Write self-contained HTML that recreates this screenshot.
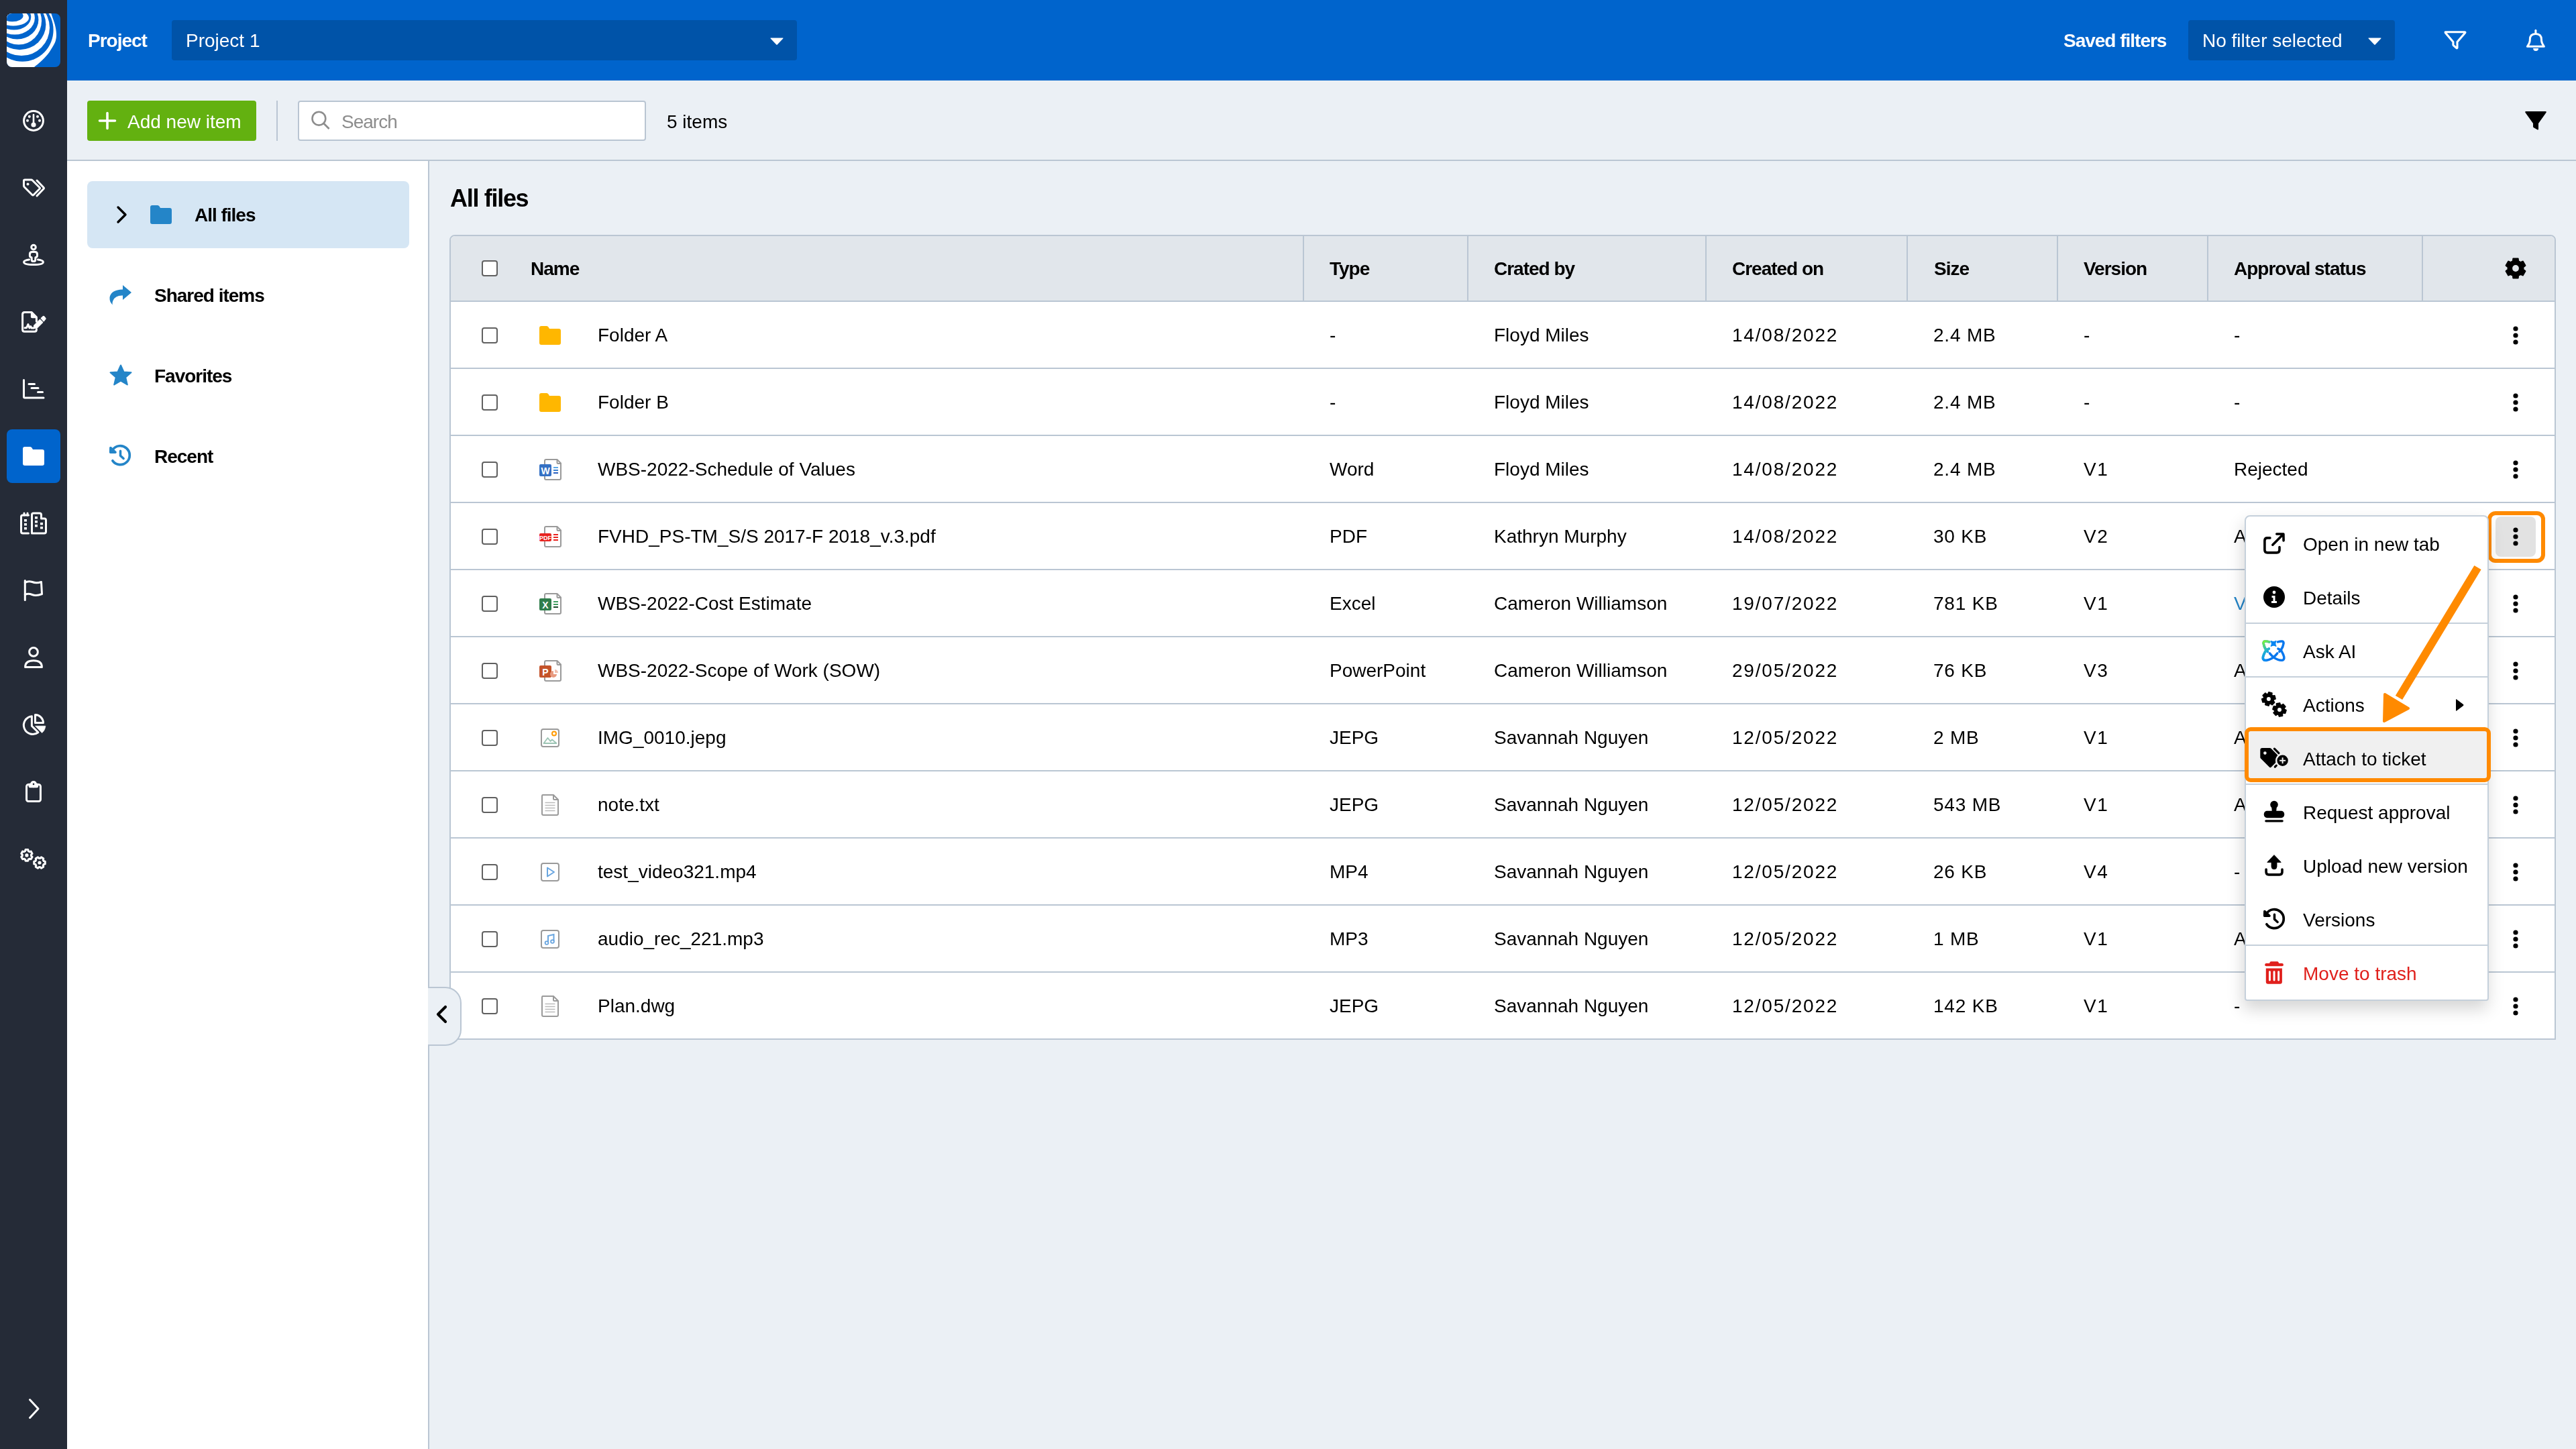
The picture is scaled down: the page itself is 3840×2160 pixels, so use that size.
<!DOCTYPE html>
<html><head><meta charset="utf-8">
<style>
*{box-sizing:border-box;margin:0;padding:0}
html,body{width:3840px;height:2160px;overflow:hidden;background:#ebf0f5;font-family:"Liberation Sans",sans-serif;color:#000;-webkit-font-smoothing:antialiased}
.t{will-change:transform}
.abs{position:absolute}
.t{position:absolute;white-space:nowrap;line-height:1}
svg{overflow:visible}
</style></head><body>

<div class="abs" style="left:0px;top:0px;width:100px;height:2160px;background:#252b37"></div>
<svg class="abs" style="left:10px;top:20px;" width="80" height="80" viewBox="0 0 80 80"><defs><clipPath id="lc"><rect x="0" y="0" width="80" height="80" rx="8"/></clipPath></defs><g clip-path="url(#lc)"><rect width="80" height="80" fill="#0064cc"/><path d="M64.00 -8.00 C64.38 -6.67 65.00 -4.10 66.30 0.00 C67.60 4.10 70.52 11.53 71.80 16.60 C73.08 21.67 73.83 26.33 74.00 30.40 C74.17 34.47 73.72 37.78 72.80 41.00 C71.88 44.22 70.42 46.42 68.50 49.70 C66.58 52.98 64.25 57.02 61.30 60.70 C58.35 64.38 54.18 68.58 50.80 71.80 C47.42 75.02 43.80 77.63 41.00 80.00 C38.20 82.37 35.17 85.00 34.00 86.00 L-5 86 L-5 -8 Z" fill="#fff"/><ellipse cx="23.3" cy="24.8" rx="46.3" ry="47.0" fill="#0064cc"/><ellipse cx="22.0" cy="21.2" rx="42.0" ry="41.9" fill="#fff"/><ellipse cx="19.2" cy="16.4" rx="39.2" ry="37.8" fill="#0064cc"/><ellipse cx="17.8" cy="11.3" rx="34.2" ry="35.3" fill="#fff"/><ellipse cx="15.5" cy="9.5" rx="31.9" ry="29.0" fill="#0064cc"/><ellipse cx="12.0" cy="6.8" rx="29.9" ry="24.8" fill="#fff"/><ellipse cx="10.85" cy="5.3" rx="25.4" ry="19.3" fill="#0064cc"/><ellipse cx="9.7" cy="6.5" rx="23.4" ry="12.0" fill="#fff"/><ellipse cx="8.3" cy="3.5" rx="16.3" ry="8.7" fill="#0064cc"/></g></svg>
<svg class="abs" style="left:34px;top:164px;" width="32" height="32" viewBox="0 0 32 32"><circle cx="16" cy="16" r="14.4" fill="none" stroke="#fff" stroke-width="3" stroke-linecap="round" stroke-linejoin="round"/><line x1="16" y1="7" x2="16" y2="20" stroke="#fff" stroke-width="2.6" stroke-linecap="round"/><circle cx="16" cy="22" r="3.6" fill="#fff"/><circle cx="9.8" cy="9.8" r="2" fill="#fff"/><circle cx="22" cy="9.8" r="2" fill="#fff"/><circle cx="7" cy="15.8" r="2" fill="#fff"/><circle cx="25" cy="15.8" r="2" fill="#fff"/></svg>
<svg class="abs" style="left:34px;top:266px;" width="32" height="32" viewBox="0 0 32 32"><path d="M1.5 3.5 Q1.5 2 3 2 L12.5 2 Q13.5 2 14.5 3 L25 13.5 Q26 14.5 25 15.5 L16 24.5 Q15 25.5 14 24.5 L2.5 13 Q1.5 12 1.5 11 Z" fill="none" stroke="#fff" stroke-width="3" stroke-linecap="round" stroke-linejoin="round" stroke-width="2.8"/><circle cx="7.5" cy="8.5" r="2" fill="#fff"/><path d="M21 3 L31 13.5 Q32 14.5 31 15.5 L21 26" fill="none" stroke="#fff" stroke-width="3" stroke-linecap="round" stroke-linejoin="round" stroke-width="2.8"/></svg>
<svg class="abs" style="left:34px;top:364px;" width="32" height="32" viewBox="0 0 32 32"><circle cx="16" cy="4.6" r="3.3" fill="none" stroke="#fff" stroke-width="3" stroke-linecap="round" stroke-linejoin="round" stroke-width="3"/><path d="M10.4 15 Q10.4 11.4 14 11.4 L18 11.4 Q21.5 11.4 21.5 15 L21.5 17 Q21.5 19.5 18.9 19.8 L18.7 23.6 Q18.6 25.6 16.6 25.6 L15.4 25.6 Q13.4 25.6 13.3 23.6 L13.1 19.8 Q10.4 19.5 10.4 17 Z" fill="none" stroke="#fff" stroke-width="3" stroke-linecap="round" stroke-linejoin="round" stroke-width="3"/><path d="M9.5 23.1 Q1.6 24.3 1.6 26.65 Q1.6 30.5 16 30.5 Q30.4 30.5 30.4 26.65 Q30.4 24.3 22.5 23.1" fill="none" stroke="#fff" stroke-width="3" stroke-linecap="round" stroke-linejoin="round" stroke-width="3.2"/></svg>
<svg class="abs" style="left:32px;top:464px;" width="40" height="32" viewBox="0 0 40 32"><path d="M22.4 26.8 L22.4 27.2 Q22.4 30.2 19.4 30.2 L4.6 30.2 Q1.6 30.2 1.6 27.2 L1.6 4.6 Q1.6 1.6 4.6 1.6 L15.2 1.6 L22.4 8.8 L22.4 15.2" fill="none" stroke="#fff" stroke-width="3" stroke-linecap="round" stroke-linejoin="round" stroke-width="3.2"/><path d="M13.9 1.6 L15.5 1.6 L22.4 8.5 L22.4 10.2 L15.9 10.2 Q13.9 10.2 13.9 8.2 Z" fill="#fff"/><path d="M5 24.8 L7.6 24.6 L9.9 19.6 L11.9 24.8 L13.8 22.6 L14.9 25 L18.5 25" fill="none" stroke="#fff" stroke-width="3" stroke-linecap="round" stroke-linejoin="round" stroke-width="2.4"/><path d="M18.3 25.4 L18.6 21 L27.5 12 L32.1 16.5 L23.3 25.2 Z" fill="#fff" stroke="#fff" stroke-width="1" stroke-linejoin="round"/><path d="M29.2 10.4 L32.4 7.5 Q33 7 33.6 7.6 L35.9 10.4 Q36.4 11 35.8 11.6 L33.2 14.9 Z" fill="#fff" stroke="#fff" stroke-width="1.2" stroke-linejoin="round"/></svg>
<svg class="abs" style="left:34px;top:564px;" width="32" height="32" viewBox="0 0 32 32"><path d="M1.5 2.5 L1.5 27.5 Q1.5 29 3 29 L31 29" fill="none" stroke="#fff" stroke-width="3" stroke-linecap="round" stroke-linejoin="round" stroke-width="2.8"/><path d="M9 8.5 L17.5 8.5 M13 14.5 L23 14.5 M22.5 20.5 L29.5 20.5" fill="none" stroke="#fff" stroke-width="3" stroke-linecap="round" stroke-linejoin="round" stroke-width="2.8"/></svg>
<div class="abs" style="left:10px;top:640px;width:80px;height:80px;background:#0064cc;border-radius:8px"></div>
<svg class="abs" style="left:34px;top:666px;" width="32" height="28" viewBox="0 0 32 28"><path d="M0 3 Q0 0 3 0 L11 0 Q12.5 0 13.5 1.5 L15 4 L29 4 Q32 4 32 7 L32 25 Q32 28 29 28 L3 28 Q0 28 0 25 Z" fill="#fff"/></svg>
<svg class="abs" style="left:30px;top:764px;" width="40" height="32" viewBox="0 0 40 32"><path d="M12.5 31 L4 31 Q1.5 31 1.5 28.5 L1.5 6.5 Q1.5 4 4 4 L12.5 4" fill="none" stroke="#fff" stroke-width="3" stroke-linecap="round" stroke-linejoin="round" stroke-width="2.8"/><path d="M6 1 L6 4 M11 1 L11 4" fill="none" stroke="#fff" stroke-width="3" stroke-linecap="round" stroke-linejoin="round" stroke-width="2.4"/><path d="M17.5 31 L17.5 3.5 Q17.5 1 20 1 L29 1 Q31.5 1 31.5 3.5 L31.5 9 L36 9 Q38.5 9 38.5 11.5 L38.5 28.5 Q38.5 31 36 31 Z" fill="none" stroke="#fff" stroke-width="3" stroke-linecap="round" stroke-linejoin="round" stroke-width="2.8"/><g fill="#fff"><rect x="6" y="10" width="4" height="3.5"/><rect x="6" y="16" width="4" height="3.5"/><rect x="6" y="22" width="4" height="3.5"/><rect x="22" y="6" width="4" height="3.5"/><rect x="22" y="12" width="4" height="3.5"/><rect x="22" y="18" width="4" height="3.5"/><rect x="30" y="15" width="4" height="3.5"/><rect x="30" y="21" width="4" height="3.5"/></g></svg>
<svg class="abs" style="left:34px;top:864px;" width="32" height="32" viewBox="0 0 32 32"><path d="M3.3 1.5 L3.3 30.5" fill="none" stroke="#fff" stroke-width="3" stroke-linecap="round" stroke-linejoin="round" stroke-width="2.8"/><path d="M3.3 4.5 Q8 1.5 14 3.5 Q20 6 27.5 3.5 L28.5 21.5 Q20 25 14 22.5 Q8 20 3.3 22.5" fill="none" stroke="#fff" stroke-width="3" stroke-linecap="round" stroke-linejoin="round" stroke-width="2.6"/></svg>
<svg class="abs" style="left:34px;top:964px;" width="32" height="32" viewBox="0 0 32 32"><circle cx="16" cy="7.9" r="6.35" fill="none" stroke="#fff" stroke-width="3" stroke-linecap="round" stroke-linejoin="round" stroke-width="3.2"/><path d="M3.6 30.4 Q3.6 20.7 16 20.7 Q28.4 20.7 28.4 30.4 Z" fill="none" stroke="#fff" stroke-width="3" stroke-linecap="round" stroke-linejoin="round" stroke-width="3.2"/></svg>
<svg class="abs" style="left:34px;top:1064px;" width="36" height="34" viewBox="0 0 36 34"><path d="M13.4 3.7 L13.4 18.2 L22.9 27.7 A13.4 13.4 0 1 1 13.4 3.7 Z" fill="none" stroke="#fff" stroke-width="3" stroke-linecap="round" stroke-linejoin="round" stroke-width="3.2"/><path d="M18.45 13.55 L18.45 1.6 A12 12 0 0 1 30.5 13.55 Z" fill="none" stroke="#fff" stroke-width="3" stroke-linecap="round" stroke-linejoin="round" stroke-width="3.2"/><path d="M18.5 18.2 L33.9 18.2 A15.4 15.4 0 0 1 28.6 28.5 Z" fill="#fff" stroke="#fff" stroke-width="0.6" stroke-linejoin="round"/></svg>
<svg class="abs" style="left:34px;top:1164px;" width="32" height="34" viewBox="0 0 32 34"><rect x="5.55" y="5.45" width="20.9" height="25" rx="2.8" fill="none" stroke="#fff" stroke-width="3" stroke-linecap="round" stroke-linejoin="round" stroke-width="3.3"/><circle cx="16" cy="5.1" r="5.1" fill="#fff"/><path d="M8.6 3.8 L23.1 3.8 L23.1 8.2 Q23.1 10.2 21.1 10.2 L10.6 10.2 Q8.6 10.2 8.6 8.2 Z" fill="#fff"/><circle cx="16" cy="4.9" r="1.3" fill="#252b37"/></svg>
<svg class="abs" style="left:20px;top:1254px;" width="60" height="48" viewBox="0 0 60 48"><polygon points="17.43,14.78 17.99,12.62 21.81,12.62 22.37,14.78 23.27,15.07 23.96,15.70 26.12,15.10 28.03,18.41 26.44,19.98 26.63,20.90 26.44,21.82 28.03,23.39 26.12,26.70 23.96,26.10 23.27,26.73 22.37,27.02 21.81,29.18 17.99,29.18 17.43,27.02 16.53,26.73 15.84,26.10 13.68,26.70 11.77,23.39 13.36,21.82 13.17,20.90 13.36,19.98 11.77,18.41 13.68,15.10 15.84,15.70 16.53,15.07" fill="none" stroke="#fff" stroke-width="3" stroke-linejoin="round"/><circle cx="19.9" cy="20.9" r="2.6" fill="#fff"/><polygon points="39.92,25.46 41.49,23.87 44.80,25.78 44.20,27.94 44.83,28.63 45.12,29.53 47.28,30.09 47.28,33.91 45.12,34.47 44.83,35.37 44.20,36.06 44.80,38.22 41.49,40.13 39.92,38.54 39.00,38.73 38.08,38.54 36.51,40.13 33.20,38.22 33.80,36.06 33.17,35.37 32.88,34.47 30.72,33.91 30.72,30.09 32.88,29.53 33.17,28.63 33.80,27.94 33.20,25.78 36.51,23.87 38.08,25.46 39.00,25.27" fill="none" stroke="#fff" stroke-width="3" stroke-linejoin="round"/><circle cx="39" cy="32" r="2.6" fill="#fff"/></svg>
<svg class="abs" style="left:36px;top:2084px;" width="32" height="32" viewBox="0 0 32 32"><path d="M8.5 2.5 L21 16 L8.5 29.5" fill="none" stroke="#fff" stroke-width="3" stroke-linecap="round" stroke-linejoin="round"/></svg>
<div class="abs" style="left:100px;top:0px;width:3740px;height:120px;background:#0064cc"></div>
<div class="t" style="left:131px;top:47.3px;font-size:28px;color:#ffffff;font-weight:bold;letter-spacing:-1.01px;">Project</div>
<div class="abs" style="left:256px;top:30px;width:932px;height:60px;background:#0053a8;border-radius:4px"></div>
<div class="t" style="left:277px;top:47.3px;font-size:28px;color:#ffffff;">Project 1</div>
<svg class="abs" style="left:1147px;top:55px;" width="22" height="13" viewBox="0 0 22 13"><path d="M2 1.5 L20 1.5 Q21 1.5 20.3 2.5 L11.7 11.5 Q11 12.3 10.3 11.5 L1.7 2.5 Q1 1.5 2 1.5 Z" fill="#fff"/></svg>
<div class="t" style="left:3076px;top:47.3px;font-size:28px;color:#ffffff;font-weight:bold;letter-spacing:-1.01px;">Saved filters</div>
<div class="abs" style="left:3262px;top:30px;width:308px;height:60px;background:#0053a8;border-radius:4px"></div>
<div class="t" style="left:3283px;top:47.3px;font-size:28px;color:#ffffff;">No filter selected</div>
<svg class="abs" style="left:3529px;top:55px;" width="22" height="13" viewBox="0 0 22 13"><path d="M2 1.5 L20 1.5 Q21 1.5 20.3 2.5 L11.7 11.5 Q11 12.3 10.3 11.5 L1.7 2.5 Q1 1.5 2 1.5 Z" fill="#fff"/></svg>
<svg class="abs" style="left:3642px;top:44px;" width="36" height="32" viewBox="0 0 36 32"><path d="M3.8 3.7 L32.3 3.7 Q33.5 3.7 32.6 5 L21 18.4 L21 26.8 Q21 28.4 19.8 27.5 L15.5 23.9 Q14.9 23.4 14.9 22.6 L14.9 18.4 L3.4 5 Q2.6 3.7 3.8 3.7 Z" fill="none" stroke="#fff" stroke-width="3.1" stroke-linejoin="round"/></svg>
<svg class="abs" style="left:3764px;top:42px;" width="32" height="36" viewBox="0 0 32 36"><path d="M7.3 18.5 L7.3 17 Q7.3 8.45 15.9 8.45 Q24.5 8.45 24.5 17 L24.5 18.5 Q24.8 22.5 28.4 27.3 L3.4 27.3 Q7 22.5 7.3 18.5 Z" fill="none" stroke="#fff" stroke-width="3" stroke-linejoin="round"/><path d="M15.9 3.2 L15.9 8" stroke="#fff" stroke-width="3" stroke-linecap="round"/><path d="M12.1 30 L20.1 30 Q20 34.1 16.1 34.1 Q12.2 34.1 12.1 30 Z" fill="#fff"/></svg>
<div class="abs" style="left:100px;top:120px;width:3740px;height:120px;background:#ebf0f5;border-bottom:2px solid #bac6d3"></div>
<div class="abs" style="left:130px;top:150px;width:252px;height:60px;background:#63b110;border-radius:4px"></div>
<svg class="abs" style="left:147px;top:167px;" width="26" height="26" viewBox="0 0 26 26"><path d="M13 1.5 L13 24.5 M1.5 13 L24.5 13" stroke="#fff" stroke-width="3.6" stroke-linecap="round"/></svg>
<div class="t" style="left:190px;top:168.3px;font-size:28px;color:#ffffff;">Add new item</div>
<div class="abs" style="left:412px;top:150px;width:2px;height:60px;background:#bac6d3"></div>
<div class="abs" style="left:444px;top:150px;width:519px;height:60px;background:#fff;border:2px solid #b9c5d2;border-radius:4px"></div>
<svg class="abs" style="left:462px;top:163px;" width="32" height="32" viewBox="0 0 32 32"><circle cx="13.4" cy="13.7" r="9.9" fill="none" stroke="#8d8d8d" stroke-width="2.6"/><path d="M20.6 21 L28.6 29" stroke="#8d8d8d" stroke-width="2.8" stroke-linecap="butt"/></svg>
<div class="t" style="left:509px;top:168.3px;font-size:28px;color:#8d8d8d;letter-spacing:-1.00px;">Search</div>
<div class="t" style="left:994px;top:168.3px;font-size:28px;color:#000;">5 items</div>
<svg class="abs" style="left:3762px;top:164px;" width="36" height="32" viewBox="0 0 36 32"><path d="M3.5 2 L32.5 2 Q34.6 2 33.4 4 L22 20 L22 28.2 Q22 30 20.3 29.3 L15 26.3 Q14.05 25.8 14.05 24.8 L14.05 20 L2.6 4 Q1.4 2 3.5 2 Z" fill="#000"/></svg>
<div class="abs" style="left:100px;top:240px;width:540px;height:1920px;background:#fff;border-right:2px solid #bac6d3"></div>
<div class="abs" style="left:130px;top:270px;width:480px;height:100px;background:#d5e6f4;border-radius:8px"></div>
<svg class="abs" style="left:171.7px;top:306px;" width="20" height="28" viewBox="0 0 20 28"><path d="M4 3 L15 14 L4 25" fill="none" stroke="#000" stroke-width="3.4" stroke-linecap="round" stroke-linejoin="round"/></svg>
<svg class="abs" style="left:224px;top:306px;" width="32" height="28" viewBox="0 0 32 28"><path d="M0 3 Q0 0 3 0 L11 0 Q12.5 0 13.5 1.5 L15 4 L29 4 Q32 4 32 7 L32 25 Q32 28 29 28 L3 28 Q0 28 0 25 Z" fill="#2485c8"/></svg>
<div class="t" style="left:290px;top:307.3px;font-size:28px;color:#000;font-weight:bold;letter-spacing:-1.01px;">All files</div>
<svg class="abs" style="left:163px;top:424px;" width="34" height="32" viewBox="0 0 34 32"><path d="M20 1 L33 12 L20 23 L20 16.5 Q9 16 5.5 24 Q3.5 29 5.5 30.5 Q0 27 0.5 19.5 Q2 8 20 7.5 Z" fill="#2485c8"/></svg>
<div class="t" style="left:229.5px;top:427.3px;font-size:28px;color:#000;font-weight:bold;letter-spacing:-1.01px;">Shared items</div>
<svg class="abs" style="left:163px;top:543px;" width="34" height="34" viewBox="0 0 34 34"><path d="M17 1.5 L21.5 11.5 L32.5 12.3 L24.2 19.6 L26.8 30.5 L17 24.6 L7.2 30.5 L9.8 19.6 L1.5 12.3 L12.5 11.5 Z" fill="#2485c8" stroke="#2485c8" stroke-width="2" stroke-linejoin="round"/></svg>
<div class="t" style="left:229.5px;top:547.3px;font-size:28px;color:#000;font-weight:bold;letter-spacing:-1.01px;">Favorites</div>
<svg class="abs" style="left:163px;top:663px;" width="34" height="34" viewBox="0 0 34 34"><path d="M4.9 23.8 A14 14 0 1 0 4.6 7.9" fill="none" stroke="#2485c8" stroke-width="3.7" stroke-linecap="round"/><path d="M1.9 4.6 L1.7 11.3 L9 11.3 Z" fill="#2485c8" stroke="#2485c8" stroke-width="3.6" stroke-linejoin="round"/><path d="M16.5 9.2 L16.5 16.2 L21.1 20.5" fill="none" stroke="#2485c8" stroke-width="3.5" stroke-linecap="round" stroke-linejoin="round"/></svg>
<div class="t" style="left:229.5px;top:667.3px;font-size:28px;color:#000;font-weight:bold;letter-spacing:-1.01px;">Recent</div>
<div class="t" style="left:671px;top:278.0px;font-size:36px;color:#000;font-weight:bold;letter-spacing:-1.30px;">All files</div>
<div class="abs" style="left:670px;top:350px;width:3140px;height:1200px;background:#fff;border:2px solid #bac6d3;border-radius:8px 8px 0 0"></div>
<div class="abs" style="left:672px;top:352px;width:3136px;height:97px;background:#e1e6eb;border-radius:6px 6px 0 0"></div>
<div class="abs" style="left:670px;top:448px;width:3140px;height:2px;background:#bac6d3"></div>
<div class="abs" style="left:1942px;top:352px;width:2px;height:96px;background:#bac6d3"></div>
<div class="abs" style="left:2187px;top:352px;width:2px;height:96px;background:#bac6d3"></div>
<div class="abs" style="left:2542px;top:352px;width:2px;height:96px;background:#bac6d3"></div>
<div class="abs" style="left:2842px;top:352px;width:2px;height:96px;background:#bac6d3"></div>
<div class="abs" style="left:3066px;top:352px;width:2px;height:96px;background:#bac6d3"></div>
<div class="abs" style="left:3290px;top:352px;width:2px;height:96px;background:#bac6d3"></div>
<div class="abs" style="left:3610px;top:352px;width:2px;height:96px;background:#bac6d3"></div>
<div class="abs" style="left:670px;top:548px;width:3140px;height:2px;background:#bac6d3"></div>
<div class="abs" style="left:670px;top:648px;width:3140px;height:2px;background:#bac6d3"></div>
<div class="abs" style="left:670px;top:748px;width:3140px;height:2px;background:#bac6d3"></div>
<div class="abs" style="left:670px;top:848px;width:3140px;height:2px;background:#bac6d3"></div>
<div class="abs" style="left:670px;top:948px;width:3140px;height:2px;background:#bac6d3"></div>
<div class="abs" style="left:670px;top:1048px;width:3140px;height:2px;background:#bac6d3"></div>
<div class="abs" style="left:670px;top:1148px;width:3140px;height:2px;background:#bac6d3"></div>
<div class="abs" style="left:670px;top:1248px;width:3140px;height:2px;background:#bac6d3"></div>
<div class="abs" style="left:670px;top:1348px;width:3140px;height:2px;background:#bac6d3"></div>
<div class="abs" style="left:670px;top:1448px;width:3140px;height:2px;background:#bac6d3"></div>
<div class="abs" style="left:718px;top:388px;width:24px;height:24px;background:#fff;border:2.5px solid #606060;border-radius:4px"></div>
<div class="t" style="left:791px;top:387.3px;font-size:28px;color:#000;font-weight:bold;letter-spacing:-1.01px;">Name</div>
<div class="t" style="left:1982px;top:387.3px;font-size:28px;color:#000;font-weight:bold;letter-spacing:-1.01px;">Type</div>
<div class="t" style="left:2227px;top:387.3px;font-size:28px;color:#000;font-weight:bold;letter-spacing:-1.01px;">Crated by</div>
<div class="t" style="left:2582px;top:387.3px;font-size:28px;color:#000;font-weight:bold;letter-spacing:-1.01px;">Created on</div>
<div class="t" style="left:2883px;top:387.3px;font-size:28px;color:#000;font-weight:bold;letter-spacing:-1.01px;">Size</div>
<div class="t" style="left:3106px;top:387.3px;font-size:28px;color:#000;font-weight:bold;letter-spacing:-1.01px;">Version</div>
<div class="t" style="left:3330px;top:387.3px;font-size:28px;color:#000;font-weight:bold;letter-spacing:-1.01px;">Approval status</div>
<svg class="abs" style="left:3726px;top:376px;" width="48" height="48" viewBox="0 0 48 48"><mask id="gm1" maskUnits="userSpaceOnUse" x="4" y="4" width="40" height="40"><rect x="4" y="4" width="40" height="40" fill="#fff"/><circle cx="24" cy="24" r="4.9" fill="#000"/></mask><polygon mask="url(#gm1)" points="19.99,13.54 20.40,9.54 27.60,9.54 28.01,13.54 29.71,14.11 31.05,15.30 34.72,13.65 38.32,19.89 35.06,22.25 35.42,24.00 35.06,25.75 38.32,28.11 34.72,34.35 31.05,32.70 29.71,33.89 28.01,34.46 27.60,38.46 20.40,38.46 19.99,34.46 18.29,33.89 16.95,32.70 13.28,34.35 9.68,28.11 12.94,25.75 12.58,24.00 12.94,22.25 9.68,19.89 13.28,13.65 16.95,15.30 18.29,14.11" fill="#000" stroke="#000" stroke-width="2.2" stroke-linejoin="round"/></svg>
<div class="abs" style="left:718px;top:488px;width:24px;height:24px;background:#fff;border:2.5px solid #606060;border-radius:4px"></div>
<svg class="abs" style="left:804px;top:486px;" width="32" height="28" viewBox="0 0 32 28"><path d="M0 3 Q0 0 3 0 L11 0 Q12.5 0 13.5 1.5 L15 4 L29 4 Q32 4 32 7 L32 25 Q32 28 29 28 L3 28 Q0 28 0 25 Z" fill="#ffb700"/></svg>
<div class="t" style="left:891px;top:486.3px;font-size:28px;color:#000;">Folder A</div>
<div class="t" style="left:1982px;top:486.3px;font-size:28px;color:#000;">-</div>
<div class="t" style="left:2227px;top:486.3px;font-size:28px;color:#000;">Floyd Miles</div>
<div class="t" style="left:2582px;top:486.3px;font-size:28px;color:#000;letter-spacing:1.80px;">14/08/2022</div>
<div class="t" style="left:2882px;top:486.3px;font-size:28px;color:#000;letter-spacing:0.80px;">2.4 MB</div>
<div class="t" style="left:3106px;top:486.3px;font-size:28px;color:#000;">-</div>
<div class="t" style="left:3330px;top:486.3px;font-size:28px;color:#000;">-</div>
<svg class="abs" style="left:3745px;top:485px;" width="10" height="30" viewBox="0 0 10 30"><circle cx="5" cy="5" r="3.6" fill="#000"/><circle cx="5" cy="15" r="3.6" fill="#000"/><circle cx="5" cy="25" r="3.6" fill="#000"/></svg>
<div class="abs" style="left:718px;top:588px;width:24px;height:24px;background:#fff;border:2.5px solid #606060;border-radius:4px"></div>
<svg class="abs" style="left:804px;top:586px;" width="32" height="28" viewBox="0 0 32 28"><path d="M0 3 Q0 0 3 0 L11 0 Q12.5 0 13.5 1.5 L15 4 L29 4 Q32 4 32 7 L32 25 Q32 28 29 28 L3 28 Q0 28 0 25 Z" fill="#ffb700"/></svg>
<div class="t" style="left:891px;top:586.3px;font-size:28px;color:#000;">Folder B</div>
<div class="t" style="left:1982px;top:586.3px;font-size:28px;color:#000;">-</div>
<div class="t" style="left:2227px;top:586.3px;font-size:28px;color:#000;">Floyd Miles</div>
<div class="t" style="left:2582px;top:586.3px;font-size:28px;color:#000;letter-spacing:1.80px;">14/08/2022</div>
<div class="t" style="left:2882px;top:586.3px;font-size:28px;color:#000;letter-spacing:0.80px;">2.4 MB</div>
<div class="t" style="left:3106px;top:586.3px;font-size:28px;color:#000;">-</div>
<div class="t" style="left:3330px;top:586.3px;font-size:28px;color:#000;">-</div>
<svg class="abs" style="left:3745px;top:585px;" width="10" height="30" viewBox="0 0 10 30"><circle cx="5" cy="5" r="3.6" fill="#000"/><circle cx="5" cy="15" r="3.6" fill="#000"/><circle cx="5" cy="25" r="3.6" fill="#000"/></svg>
<div class="abs" style="left:718px;top:688px;width:24px;height:24px;background:#fff;border:2.5px solid #606060;border-radius:4px"></div>
<svg class="abs" style="left:804px;top:684px;" width="34" height="32" viewBox="0 0 34 32"><path d="M10 1 L26.5 1 L32 6.5 L32 29 Q32 31 30 31 L10 31 Q8 31 8 29 L8 3 Q8 1 10 1 Z" fill="#fff" stroke="#9a9a9a" stroke-width="2" stroke-linejoin="round"/><path d="M26.5 1 L26.5 5.5 Q26.5 7 28 7 L32 7" fill="none" stroke="#9a9a9a" stroke-width="2" stroke-linejoin="round"/><rect x="0" y="8" width="18" height="18" rx="2" fill="#3470c4"/><text x="9" y="22.5" font-family="Liberation Sans" font-weight="bold" font-size="14" fill="#fff" text-anchor="middle">W</text><path d="M21 13 L28 13" stroke="#5aa8e8" stroke-width="2"/><path d="M21 17 L28 17" stroke="#3a80d0" stroke-width="2"/><path d="M21 21 L28 21" stroke="#2a60c0" stroke-width="2"/></svg>
<div class="t" style="left:891px;top:686.3px;font-size:28px;color:#000;">WBS-2022-Schedule of Values</div>
<div class="t" style="left:1982px;top:686.3px;font-size:28px;color:#000;">Word</div>
<div class="t" style="left:2227px;top:686.3px;font-size:28px;color:#000;">Floyd Miles</div>
<div class="t" style="left:2582px;top:686.3px;font-size:28px;color:#000;letter-spacing:1.80px;">14/08/2022</div>
<div class="t" style="left:2882px;top:686.3px;font-size:28px;color:#000;letter-spacing:0.80px;">2.4 MB</div>
<div class="t" style="left:3106px;top:686.3px;font-size:28px;color:#000;letter-spacing:1.50px;">V1</div>
<div class="t" style="left:3330px;top:686.3px;font-size:28px;color:#000;">Rejected</div>
<svg class="abs" style="left:3745px;top:685px;" width="10" height="30" viewBox="0 0 10 30"><circle cx="5" cy="5" r="3.6" fill="#000"/><circle cx="5" cy="15" r="3.6" fill="#000"/><circle cx="5" cy="25" r="3.6" fill="#000"/></svg>
<div class="abs" style="left:718px;top:788px;width:24px;height:24px;background:#fff;border:2.5px solid #606060;border-radius:4px"></div>
<svg class="abs" style="left:804px;top:784px;" width="34" height="32" viewBox="0 0 34 32"><path d="M10 1 L26.5 1 L32 6.5 L32 29 Q32 31 30 31 L10 31 Q8 31 8 29 L8 3 Q8 1 10 1 Z" fill="#fff" stroke="#9a9a9a" stroke-width="2" stroke-linejoin="round"/><path d="M26.5 1 L26.5 5.5 Q26.5 7 28 7 L32 7" fill="none" stroke="#9a9a9a" stroke-width="2" stroke-linejoin="round"/><rect x="0" y="11" width="18" height="12" rx="2" fill="#e8231f"/><text x="9" y="21" font-family="Liberation Sans" font-weight="bold" font-size="9" fill="#fff" text-anchor="middle">PDF</text><path d="M21 13 L28 13 M21 17 L28 17 M21 21 L28 21" stroke="#e8231f" stroke-width="2"/></svg>
<div class="t" style="left:891px;top:786.3px;font-size:28px;color:#000;">FVHD_PS-TM_S/S 2017-F 2018_v.3.pdf</div>
<div class="t" style="left:1982px;top:786.3px;font-size:28px;color:#000;">PDF</div>
<div class="t" style="left:2227px;top:786.3px;font-size:28px;color:#000;">Kathryn Murphy</div>
<div class="t" style="left:2582px;top:786.3px;font-size:28px;color:#000;letter-spacing:1.80px;">14/08/2022</div>
<div class="t" style="left:2882px;top:786.3px;font-size:28px;color:#000;letter-spacing:0.80px;">30 KB</div>
<div class="t" style="left:3106px;top:786.3px;font-size:28px;color:#000;letter-spacing:1.50px;">V2</div>
<div class="t" style="left:3330px;top:786.3px;font-size:28px;color:#000;">Approved</div>
<div class="abs" style="left:718px;top:888px;width:24px;height:24px;background:#fff;border:2.5px solid #606060;border-radius:4px"></div>
<svg class="abs" style="left:804px;top:884px;" width="34" height="32" viewBox="0 0 34 32"><path d="M10 1 L26.5 1 L32 6.5 L32 29 Q32 31 30 31 L10 31 Q8 31 8 29 L8 3 Q8 1 10 1 Z" fill="#fff" stroke="#9a9a9a" stroke-width="2" stroke-linejoin="round"/><path d="M26.5 1 L26.5 5.5 Q26.5 7 28 7 L32 7" fill="none" stroke="#9a9a9a" stroke-width="2" stroke-linejoin="round"/><rect x="0" y="8" width="18" height="18" rx="2" fill="#2f7d4b"/><text x="9" y="22.5" font-family="Liberation Sans" font-weight="bold" font-size="14" fill="#fff" text-anchor="middle">X</text><path d="M21 13 L28 13 M21 17 L28 17" stroke="#40a060" stroke-width="2"/><path d="M21 21 L28 21" stroke="#1a4a2a" stroke-width="2"/></svg>
<div class="t" style="left:891px;top:886.3px;font-size:28px;color:#000;">WBS-2022-Cost Estimate</div>
<div class="t" style="left:1982px;top:886.3px;font-size:28px;color:#000;">Excel</div>
<div class="t" style="left:2227px;top:886.3px;font-size:28px;color:#000;">Cameron Williamson</div>
<div class="t" style="left:2582px;top:886.3px;font-size:28px;color:#000;letter-spacing:1.80px;">19/07/2022</div>
<div class="t" style="left:2882px;top:886.3px;font-size:28px;color:#000;letter-spacing:0.80px;">781 KB</div>
<div class="t" style="left:3106px;top:886.3px;font-size:28px;color:#000;letter-spacing:1.50px;">V1</div>
<div class="t" style="left:3330px;top:886.3px;font-size:28px;color:#2485c8;">View</div>
<svg class="abs" style="left:3745px;top:885px;" width="10" height="30" viewBox="0 0 10 30"><circle cx="5" cy="5" r="3.6" fill="#000"/><circle cx="5" cy="15" r="3.6" fill="#000"/><circle cx="5" cy="25" r="3.6" fill="#000"/></svg>
<div class="abs" style="left:718px;top:988px;width:24px;height:24px;background:#fff;border:2.5px solid #606060;border-radius:4px"></div>
<svg class="abs" style="left:804px;top:984px;" width="34" height="32" viewBox="0 0 34 32"><path d="M10 1 L26.5 1 L32 6.5 L32 29 Q32 31 30 31 L10 31 Q8 31 8 29 L8 3 Q8 1 10 1 Z" fill="#fff" stroke="#9a9a9a" stroke-width="2" stroke-linejoin="round"/><path d="M26.5 1 L26.5 5.5 Q26.5 7 28 7 L32 7" fill="none" stroke="#9a9a9a" stroke-width="2" stroke-linejoin="round"/><rect x="0" y="8" width="18" height="18" rx="2" fill="#c4532a"/><text x="9" y="22.5" font-family="Liberation Sans" font-weight="bold" font-size="14" fill="#fff" text-anchor="middle">P</text><path d="M21 16 A5 5 0 1 0 26 21 L21 21 Z" fill="#e89a80"/><path d="M23 14 A5 5 0 0 1 28 19 L23 19 Z" fill="#f0c0b0"/></svg>
<div class="t" style="left:891px;top:986.3px;font-size:28px;color:#000;">WBS-2022-Scope of Work (SOW)</div>
<div class="t" style="left:1982px;top:986.3px;font-size:28px;color:#000;">PowerPoint</div>
<div class="t" style="left:2227px;top:986.3px;font-size:28px;color:#000;">Cameron Williamson</div>
<div class="t" style="left:2582px;top:986.3px;font-size:28px;color:#000;letter-spacing:1.80px;">29/05/2022</div>
<div class="t" style="left:2882px;top:986.3px;font-size:28px;color:#000;letter-spacing:0.80px;">76 KB</div>
<div class="t" style="left:3106px;top:986.3px;font-size:28px;color:#000;letter-spacing:1.50px;">V3</div>
<div class="t" style="left:3330px;top:986.3px;font-size:28px;color:#000;">Approved</div>
<svg class="abs" style="left:3745px;top:985px;" width="10" height="30" viewBox="0 0 10 30"><circle cx="5" cy="5" r="3.6" fill="#000"/><circle cx="5" cy="15" r="3.6" fill="#000"/><circle cx="5" cy="25" r="3.6" fill="#000"/></svg>
<div class="abs" style="left:718px;top:1088px;width:24px;height:24px;background:#fff;border:2.5px solid #606060;border-radius:4px"></div>
<svg class="abs" style="left:806px;top:1086px;" width="28" height="28" viewBox="0 0 28 28"><rect x="1" y="1" width="26" height="26" rx="3" fill="#fff" stroke="#9a9a9a" stroke-width="2"/><circle cx="20" cy="7.5" r="3" fill="none" stroke="#ff9a00" stroke-width="2"/><path d="M4.5 22 L10.5 14 L14.5 19 L17 16.5 L23.5 22 Z" fill="none" stroke="#9cc4b4" stroke-width="1.8" stroke-linejoin="round"/></svg>
<div class="t" style="left:891px;top:1086.3px;font-size:28px;color:#000;">IMG_0010.jepg</div>
<div class="t" style="left:1982px;top:1086.3px;font-size:28px;color:#000;">JEPG</div>
<div class="t" style="left:2227px;top:1086.3px;font-size:28px;color:#000;">Savannah Nguyen</div>
<div class="t" style="left:2582px;top:1086.3px;font-size:28px;color:#000;letter-spacing:1.80px;">12/05/2022</div>
<div class="t" style="left:2882px;top:1086.3px;font-size:28px;color:#000;letter-spacing:0.80px;">2 MB</div>
<div class="t" style="left:3106px;top:1086.3px;font-size:28px;color:#000;letter-spacing:1.50px;">V1</div>
<div class="t" style="left:3330px;top:1086.3px;font-size:28px;color:#000;">Approved</div>
<svg class="abs" style="left:3745px;top:1085px;" width="10" height="30" viewBox="0 0 10 30"><circle cx="5" cy="5" r="3.6" fill="#000"/><circle cx="5" cy="15" r="3.6" fill="#000"/><circle cx="5" cy="25" r="3.6" fill="#000"/></svg>
<div class="abs" style="left:718px;top:1188px;width:24px;height:24px;background:#fff;border:2.5px solid #606060;border-radius:4px"></div>
<svg class="abs" style="left:806px;top:1184px;" width="28" height="32" viewBox="0 0 28 32"><path d="M3 1 L19 1 L26 8 L26 29 Q26 31 24 31 L4 31 Q2 31 2 29 L2 3 Q2 1 3 1 Z" fill="#fff" stroke="#9a9a9a" stroke-width="2" stroke-linejoin="round"/><path d="M19 1 L19 6.5 Q19 8 20.5 8 L26 8" fill="none" stroke="#9a9a9a" stroke-width="2" stroke-linejoin="round"/><path d="M6.5 12.5 L21.5 12.5 M6.5 16.5 L21.5 16.5 M6.5 20.5 L21.5 20.5 M6.5 24.5 L21.5 24.5" stroke="#bbb" stroke-width="1.6"/></svg>
<div class="t" style="left:891px;top:1186.3px;font-size:28px;color:#000;">note.txt</div>
<div class="t" style="left:1982px;top:1186.3px;font-size:28px;color:#000;">JEPG</div>
<div class="t" style="left:2227px;top:1186.3px;font-size:28px;color:#000;">Savannah Nguyen</div>
<div class="t" style="left:2582px;top:1186.3px;font-size:28px;color:#000;letter-spacing:1.80px;">12/05/2022</div>
<div class="t" style="left:2882px;top:1186.3px;font-size:28px;color:#000;letter-spacing:0.80px;">543 MB</div>
<div class="t" style="left:3106px;top:1186.3px;font-size:28px;color:#000;letter-spacing:1.50px;">V1</div>
<div class="t" style="left:3330px;top:1186.3px;font-size:28px;color:#000;">Approved</div>
<svg class="abs" style="left:3745px;top:1185px;" width="10" height="30" viewBox="0 0 10 30"><circle cx="5" cy="5" r="3.6" fill="#000"/><circle cx="5" cy="15" r="3.6" fill="#000"/><circle cx="5" cy="25" r="3.6" fill="#000"/></svg>
<div class="abs" style="left:718px;top:1288px;width:24px;height:24px;background:#fff;border:2.5px solid #606060;border-radius:4px"></div>
<svg class="abs" style="left:806px;top:1286px;" width="28" height="28" viewBox="0 0 28 28"><rect x="1" y="1" width="26" height="26" rx="3" fill="#fff" stroke="#9a9a9a" stroke-width="2"/><path d="M10 7.5 L20 14 L10 20.5 Z" fill="none" stroke="#6aa6e0" stroke-width="2" stroke-linejoin="round"/></svg>
<div class="t" style="left:891px;top:1286.3px;font-size:28px;color:#000;">test_video321.mp4</div>
<div class="t" style="left:1982px;top:1286.3px;font-size:28px;color:#000;">MP4</div>
<div class="t" style="left:2227px;top:1286.3px;font-size:28px;color:#000;">Savannah Nguyen</div>
<div class="t" style="left:2582px;top:1286.3px;font-size:28px;color:#000;letter-spacing:1.80px;">12/05/2022</div>
<div class="t" style="left:2882px;top:1286.3px;font-size:28px;color:#000;letter-spacing:0.80px;">26 KB</div>
<div class="t" style="left:3106px;top:1286.3px;font-size:28px;color:#000;letter-spacing:1.50px;">V4</div>
<div class="t" style="left:3330px;top:1286.3px;font-size:28px;color:#000;">-</div>
<svg class="abs" style="left:3745px;top:1285px;" width="10" height="30" viewBox="0 0 10 30"><circle cx="5" cy="5" r="3.6" fill="#000"/><circle cx="5" cy="15" r="3.6" fill="#000"/><circle cx="5" cy="25" r="3.6" fill="#000"/></svg>
<div class="abs" style="left:718px;top:1388px;width:24px;height:24px;background:#fff;border:2.5px solid #606060;border-radius:4px"></div>
<svg class="abs" style="left:806px;top:1386px;" width="28" height="28" viewBox="0 0 28 28"><rect x="1" y="1" width="26" height="26" rx="3" fill="#fff" stroke="#9a9a9a" stroke-width="2"/><path d="M11 19 L11 9 L19.5 7 L19.5 17" fill="none" stroke="#6aa6e0" stroke-width="2"/><circle cx="9" cy="19.5" r="2.4" fill="none" stroke="#6aa6e0" stroke-width="1.8"/><circle cx="17.5" cy="17.5" r="2.4" fill="none" stroke="#6aa6e0" stroke-width="1.8"/></svg>
<div class="t" style="left:891px;top:1386.3px;font-size:28px;color:#000;">audio_rec_221.mp3</div>
<div class="t" style="left:1982px;top:1386.3px;font-size:28px;color:#000;">MP3</div>
<div class="t" style="left:2227px;top:1386.3px;font-size:28px;color:#000;">Savannah Nguyen</div>
<div class="t" style="left:2582px;top:1386.3px;font-size:28px;color:#000;letter-spacing:1.80px;">12/05/2022</div>
<div class="t" style="left:2882px;top:1386.3px;font-size:28px;color:#000;letter-spacing:0.80px;">1 MB</div>
<div class="t" style="left:3106px;top:1386.3px;font-size:28px;color:#000;letter-spacing:1.50px;">V1</div>
<div class="t" style="left:3330px;top:1386.3px;font-size:28px;color:#000;">Approved</div>
<svg class="abs" style="left:3745px;top:1385px;" width="10" height="30" viewBox="0 0 10 30"><circle cx="5" cy="5" r="3.6" fill="#000"/><circle cx="5" cy="15" r="3.6" fill="#000"/><circle cx="5" cy="25" r="3.6" fill="#000"/></svg>
<div class="abs" style="left:718px;top:1488px;width:24px;height:24px;background:#fff;border:2.5px solid #606060;border-radius:4px"></div>
<svg class="abs" style="left:806px;top:1484px;" width="28" height="32" viewBox="0 0 28 32"><path d="M3 1 L19 1 L26 8 L26 29 Q26 31 24 31 L4 31 Q2 31 2 29 L2 3 Q2 1 3 1 Z" fill="#fff" stroke="#9a9a9a" stroke-width="2" stroke-linejoin="round"/><path d="M19 1 L19 6.5 Q19 8 20.5 8 L26 8" fill="none" stroke="#9a9a9a" stroke-width="2" stroke-linejoin="round"/><path d="M6.5 12.5 L21.5 12.5 M6.5 16.5 L21.5 16.5 M6.5 20.5 L21.5 20.5 M6.5 24.5 L21.5 24.5" stroke="#bbb" stroke-width="1.6"/></svg>
<div class="t" style="left:891px;top:1486.3px;font-size:28px;color:#000;">Plan.dwg</div>
<div class="t" style="left:1982px;top:1486.3px;font-size:28px;color:#000;">JEPG</div>
<div class="t" style="left:2227px;top:1486.3px;font-size:28px;color:#000;">Savannah Nguyen</div>
<div class="t" style="left:2582px;top:1486.3px;font-size:28px;color:#000;letter-spacing:1.80px;">12/05/2022</div>
<div class="t" style="left:2882px;top:1486.3px;font-size:28px;color:#000;letter-spacing:0.80px;">142 KB</div>
<div class="t" style="left:3106px;top:1486.3px;font-size:28px;color:#000;letter-spacing:1.50px;">V1</div>
<div class="t" style="left:3330px;top:1486.3px;font-size:28px;color:#000;">-</div>
<svg class="abs" style="left:3745px;top:1485px;" width="10" height="30" viewBox="0 0 10 30"><circle cx="5" cy="5" r="3.6" fill="#000"/><circle cx="5" cy="15" r="3.6" fill="#000"/><circle cx="5" cy="25" r="3.6" fill="#000"/></svg>
<div class="abs" style="left:3720px;top:770px;width:60px;height:60px;background:#e2e2e2;border-radius:8px"></div>
<svg class="abs" style="left:3745px;top:785px;" width="10" height="30" viewBox="0 0 10 30"><circle cx="5" cy="5" r="3.6" fill="#000"/><circle cx="5" cy="15" r="3.6" fill="#000"/><circle cx="5" cy="25" r="3.6" fill="#000"/></svg>
<div class="abs" style="left:3708px;top:762px;width:86px;height:77px;border:6px solid #ff8a00;border-radius:12px"></div>
<div class="abs" style="left:638px;top:1471px;width:50px;height:88px;background:#ebf0f5;border:2px solid #bac6d3;border-left:none;border-radius:0 24px 24px 0"></div>
<svg class="abs" style="left:648px;top:1498px;" width="22" height="32" viewBox="0 0 22 32"><path d="M16 3 L5 14 L16 25" fill="none" stroke="#000" stroke-width="4.2" stroke-linecap="round" stroke-linejoin="round"/></svg>
<div class="abs" style="left:3346px;top:768px;width:364px;height:724px;background:#fff;border:2px solid #c5d0db;border-radius:8px 8px 4px 4px;box-shadow:-2px 12px 24px rgba(0,0,0,0.17)"></div>
<div class="abs" style="left:3348px;top:928px;width:360px;height:2px;background:#c5d0db"></div>
<div class="abs" style="left:3348px;top:1008px;width:360px;height:2px;background:#c5d0db"></div>
<div class="abs" style="left:3348px;top:1168px;width:360px;height:2px;background:#c5d0db"></div>
<div class="abs" style="left:3348px;top:1408px;width:360px;height:2px;background:#c5d0db"></div>
<div class="abs" style="left:3346px;top:1084px;width:367px;height:82px;background:#f0f0f0;border:6px solid #ff8a00;border-radius:9px"></div>
<div class="t" style="left:3433px;top:798.3px;font-size:28px;color:#000;">Open in new tab</div>
<div class="t" style="left:3433px;top:878.3px;font-size:28px;color:#000;">Details</div>
<div class="t" style="left:3433px;top:958.3px;font-size:28px;color:#000;">Ask AI</div>
<div class="t" style="left:3433px;top:1038.3px;font-size:28px;color:#000;">Actions</div>
<div class="t" style="left:3433px;top:1118.3px;font-size:28px;color:#000;">Attach to ticket</div>
<div class="t" style="left:3433px;top:1198.3px;font-size:28px;color:#000;">Request approval</div>
<div class="t" style="left:3433px;top:1278.3px;font-size:28px;color:#000;">Upload new version</div>
<div class="t" style="left:3433px;top:1358.3px;font-size:28px;color:#000;">Versions</div>
<div class="t" style="left:3433px;top:1438.3px;font-size:28px;color:#e0201c;">Move to trash</div>
<svg class="abs" style="left:3374px;top:794px;" width="34" height="34" viewBox="0 0 34 34"><path d="M9.9 7.9 L6 7.9 Q1.9 7.9 1.9 12 L1.9 25.8 Q1.9 29.9 6 29.9 L19.9 29.9 Q24 29.9 24 25.8 L24 21.6" fill="none" stroke="#000" stroke-width="3.6" stroke-linecap="round" stroke-linejoin="round"/><path d="M13.8 18.2 L29.2 2.8 M19.8 2 L29.9 2 L30.1 11.9" fill="none" stroke="#000" stroke-width="3.6" stroke-linecap="round" stroke-linejoin="round"/></svg>
<svg class="abs" style="left:3374px;top:874px;" width="32" height="32" viewBox="0 0 32 32"><circle cx="16" cy="16" r="16" fill="#000"/><circle cx="16" cy="9" r="2.4" fill="#fff"/><path d="M12.5 14 L17.5 14 L17.5 22 L20 22 L20 25 L12 25 L12 22 L14.5 22 L14.5 17 L12.5 17 Z" fill="#fff"/></svg>
<svg class="abs" style="left:3372px;top:954px;" width="36" height="34" viewBox="0 0 36 34"><defs><linearGradient id="ag" gradientUnits="userSpaceOnUse" x1="0" y1="4" x2="14" y2="24"><stop offset="0" stop-color="#78f33c"/><stop offset="0.55" stop-color="#20b4d0"/><stop offset="1" stop-color="#0a8af5"/></linearGradient></defs><g fill="none" stroke-width="3.5" stroke-linecap="round" stroke-linejoin="round"><path d="M23.5 2.9 Q32.2 0.2 32.1 5 Q31.4 10 28.2 15.1 L25.8 17.4 M22.8 19.8 Q20.2 23 17.1 25.9 Q9.2 31.3 3.3 30.1 Q-0.2 28.4 2.6 21.8 Q4.2 18 6 15.1 L10.3 13.1" stroke="#0a78ee"/><path d="M10.7 2.9 Q2 0.2 2.1 5 Q2.8 10 6 15.1 L8.4 17.4 M11.4 19.8 Q14 23 17.1 25.9 Q25 31.3 30.9 30.1 Q34.4 28.4 31.6 21.8 Q30 18 28.2 15.1 L23.9 13.1" stroke="#0a78ee"/><path d="M10.7 2.9 Q2 0.2 2.1 5 Q2.8 10 6 15.1 L8.4 17.4 M6 15.1 Q4.2 18 2.6 21.8 Q-0.2 28.4 3.3 30.1 L6 30.6 M6 15.1 L10.3 13.1" stroke="url(#ag)"/></g><path d="M13.4 1.7 Q17.1 4.1 20.8 1.7 Q18.4 5.4 20.8 9.1 Q17.1 6.7 13.4 9.1 Q15.8 5.4 13.4 1.7 Z" fill="#0a86f2" stroke="#0a86f2" stroke-width="1.6" stroke-linejoin="round"/></svg>
<svg class="abs" style="left:3364px;top:1026px;" width="56" height="48" viewBox="0 0 56 48"><mask id="gm2" maskUnits="userSpaceOnUse" x="2.8999999999999986" y="0.9000000000000004" width="30" height="30"><rect x="2.8999999999999986" y="0.9000000000000004" width="30" height="30" fill="#fff"/><circle cx="17.9" cy="15.9" r="3" fill="#000"/></mask><polygon mask="url(#gm2)" points="17.15,8.74 18.07,6.00 22.70,7.24 22.13,10.08 23.09,10.71 23.72,11.67 26.56,11.10 27.80,15.73 25.06,16.65 24.99,17.80 24.48,18.83 26.39,21.00 23.00,24.39 20.83,22.48 19.80,22.99 18.65,23.06 17.73,25.80 13.10,24.56 13.67,21.72 12.71,21.09 12.08,20.13 9.24,20.70 8.00,16.07 10.74,15.15 10.81,14.00 11.32,12.97 9.41,10.80 12.80,7.41 14.97,9.32 16.00,8.81" fill="#000" stroke="#000" stroke-width="2.2" stroke-linejoin="round"/><mask id="gm3" maskUnits="userSpaceOnUse" x="19.1" y="17.1" width="29.8" height="29.8"><rect x="19.1" y="17.1" width="29.8" height="29.8" fill="#fff"/><circle cx="34" cy="32" r="3" fill="#000"/></mask><polygon mask="url(#gm3)" points="30.13,26.05 29.70,23.19 34.34,22.21 35.11,24.99 36.24,25.11 37.22,25.67 39.48,23.88 42.65,27.40 40.63,29.46 41.08,30.49 41.09,31.63 43.78,32.68 42.31,37.19 39.52,36.47 38.85,37.38 37.87,37.95 38.30,40.81 33.66,41.79 32.89,39.01 31.76,38.89 30.78,38.33 28.52,40.12 25.35,36.60 27.37,34.54 26.92,33.51 26.91,32.37 24.22,31.32 25.69,26.81 28.48,27.53 29.15,26.62" fill="#000" stroke="#000" stroke-width="2.2" stroke-linejoin="round"/></svg>
<svg class="abs" style="left:3660px;top:1041px;" width="14" height="20" viewBox="0 0 14 20"><path d="M2 1.5 L12 9 Q13 10 12 11 L2 18.5 Q1 19.3 1 18 L1 2 Q1 0.7 2 1.5 Z" fill="#000"/></svg>
<svg class="abs" style="left:3360px;top:1106px;" width="60" height="48" viewBox="0 0 60 48"><mask id="tagm" maskUnits="userSpaceOnUse" x="0" y="0" width="60" height="48"><rect width="60" height="48" fill="#fff"/><circle cx="42.6" cy="27.7" r="10.6" fill="#000"/><circle cx="16.4" cy="16.6" r="2.3" fill="#000"/></mask><path mask="url(#tagm)" d="M10.3 12 Q10.3 10.1 12.3 10.1 L23.5 10.1 Q24.3 10.1 25 10.8 L37.4 23.2 Q38 23.8 37.4 24.4 L25 36.8 Q24.3 37.5 23.6 36.8 L10.9 24.1 Q10.3 23.5 10.3 22.7 Z" fill="#000" stroke="#000" stroke-width="2" stroke-linejoin="round"/><path d="M30.4 10.2 L36.9 16.7 M31.3 37.2 L33.3 35.2" stroke="#000" stroke-width="3.2" stroke-linecap="round"/><circle cx="42.6" cy="27.7" r="8.2" fill="#000"/><path d="M42.6 23.2 L42.6 32.2 M38.1 27.7 L47.1 27.7" stroke="#f2f2f2" stroke-width="2"/></svg>
<svg class="abs" style="left:3374px;top:1193px;" width="34" height="34" viewBox="0 0 34 34"><circle cx="16" cy="6.5" r="5.8" fill="#000"/><path d="M12.2 10 L19.8 10 L19.2 16.5 L12.8 16.5 Z" fill="#000"/><rect x="0.8" y="15.8" width="30.4" height="10.4" rx="4.6" fill="#000"/><rect x="2.2" y="29.2" width="27.6" height="3.2" rx="1.6" fill="#000"/></svg>
<svg class="abs" style="left:3374px;top:1274px;" width="32" height="34" viewBox="0 0 32 34"><path d="M16 0.6 L26 11 Q26.6 11.6 25.8 11.6 L20 11.6 L20 17.8 Q20 21.8 16 21.8 Q12 21.8 12 17.8 L12 11.6 L6.2 11.6 Q5.4 11.6 6 11 Z" fill="#000" stroke="#000" stroke-width="0.8" stroke-linejoin="round"/><path d="M4.1 22 L4.1 26 Q4.1 29.9 8 29.9 L24 29.9 Q28 29.9 28 26 L28 22" fill="none" stroke="#000" stroke-width="3.6" stroke-linecap="round"/></svg>
<svg class="abs" style="left:3374px;top:1354px;" width="34" height="34" viewBox="0 0 34 34"><path d="M4.9 23.8 A14 14 0 1 0 4.6 7.9" fill="none" stroke="#000" stroke-width="3.7" stroke-linecap="round"/><path d="M1.9 4.6 L1.7 11.3 L9 11.3 Z" fill="#000" stroke="#000" stroke-width="3.6" stroke-linejoin="round"/><path d="M16.5 9.2 L16.5 16.2 L21.1 20.5" fill="none" stroke="#000" stroke-width="3.5" stroke-linecap="round" stroke-linejoin="round"/></svg>
<svg class="abs" style="left:3376px;top:1433px;" width="30" height="36" viewBox="0 0 30 36"><rect x="0.2" y="3.1" width="27.7" height="4.2" rx="2.1" fill="#e0201c"/><path d="M9.4 0.3 L18.8 0.3 Q19.8 0.3 20.3 1.3 L21.4 3.6 L6.8 3.6 L7.9 1.3 Q8.4 0.3 9.4 0.3 Z" fill="#e0201c"/><path d="M1.8 10.6 L25.9 10.6 L25.9 30.6 Q25.9 33.8 22.7 33.8 L5 33.8 Q1.8 33.8 1.8 30.6 Z" fill="#e0201c"/><path d="M7.45 15.8 L7.45 28.1 M14.05 15.8 L14.05 28.1 M20.65 15.8 L20.65 28.1" stroke="#fff" stroke-width="2.9" stroke-linecap="round"/></svg>
<svg class="abs" style="left:0;top:0" width="3840" height="2160"><path d="M3693.5 846 L3576 1040" stroke="#ff8a00" stroke-width="12" stroke-linecap="butt"/><path d="M3555 1035 L3590 1056 L3554 1075 Z" fill="#ff8a00" stroke="#ff8a00" stroke-width="4" stroke-linejoin="round"/></svg>
</body></html>
